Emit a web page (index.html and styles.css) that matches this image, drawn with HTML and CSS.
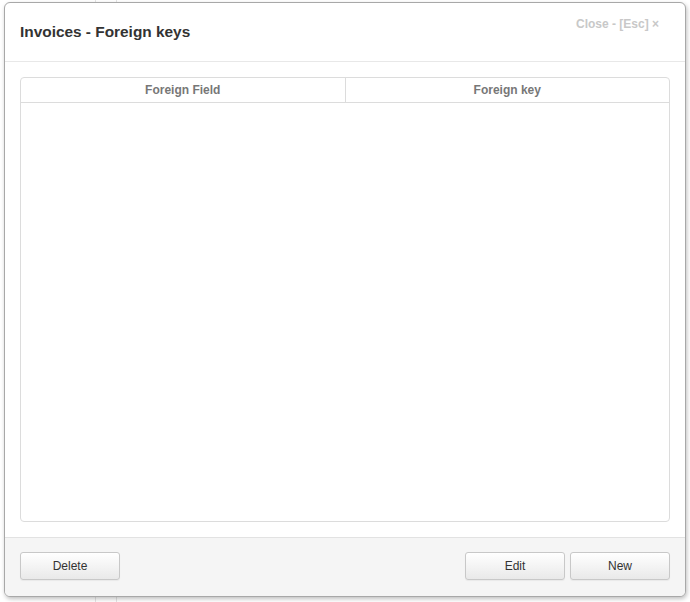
FILE: index.html
```html
<!DOCTYPE html>
<html>
<head>
<meta charset="utf-8">
<link rel="stylesheet" href="styles.css">
</head>
<body>
<div class="backdrop"></div>
<div class="dialog">
  <div class="dlg-header">
    <h1 class="dlg-title">Invoices - Foreign keys</h1>
    <span class="dlg-close">Close - [Esc] ×</span>
  </div>
  <div class="dlg-body">
    <div class="grid">
      <div class="grid-head">
        <div class="grid-col">Foreign Field</div>
        <div class="grid-col">Foreign key</div>
      </div>
      <div class="grid-rows"></div>
    </div>
  </div>
  <div class="dlg-footer">
    <button class="btn">Delete</button>
    <div class="spacer"></div>
    <button class="btn">Edit</button>
    <button class="btn">New</button>
  </div>
</div>
</body>
</html>
```
FILE: styles.css
```css
html, body {
  margin: 0;
  padding: 0;
  background: #fff;
  font-family: "Liberation Sans", Arial, sans-serif;
}
body {
  width: 690px;
  height: 602px;
  position: relative;
  overflow: hidden;
}
.backdrop {
  position: absolute;
  left: 95px;
  top: 0;
  width: 20px;
  height: 602px;
  border-left: 1px solid #e4e4e4;
  border-right: 1px solid #e4e4e4;
}
.dialog {
  position: absolute;
  left: 4px;
  top: 2px;
  width: 680px;
  height: 593px;
  border: 1px solid #a8a8a8;
  border-radius: 6px;
  background: #fff;
  box-shadow: 1px 2px 4px rgba(0,0,0,0.25);
  display: flex;
  flex-direction: column;
  overflow: hidden;
}
.dlg-header {
  height: 58px;
  border-bottom: 1px solid #e8e8e8;
  display: flex;
  justify-content: space-between;
  align-items: flex-start;
  padding: 0 26px 0 15px;
}
.dlg-title {
  margin: 19px 0 0 0;
  font-size: 15.4px;
  font-weight: bold;
  color: #333;
  line-height: 20px;
}
.dlg-close {
  margin-top: 13px;
  font-size: 12px;
  font-weight: bold;
  color: #c8c8c8;
  line-height: 16px;
}
.dlg-body {
  flex: 1;
  padding: 15px 15px 15px 15px;
  display: flex;
}
.grid {
  flex: 1;
  border: 1px solid #dcdcdc;
  border-radius: 4px;
  display: flex;
  flex-direction: column;
}
.grid-head {
  display: flex;
  height: 24px;
  border-bottom: 1px solid #dcdcdc;
}
.grid-col {
  flex: 1;
  text-align: center;
  font-size: 12px;
  font-weight: bold;
  color: #777;
  line-height: 24px;
}
.grid-col + .grid-col {
  border-left: 1px solid #dcdcdc;
}
.grid-rows {
  flex: 1;
}
.dlg-footer {
  border-top: 1px solid #e2e2e2;
  background: #f5f5f5;
  display: flex;
  align-items: flex-start;
  padding: 14px 15px 0 15px;
  gap: 5px;
  box-sizing: border-box;
  height: 59px;
}
.spacer {
  flex: 1;
}
.btn {
  width: 100px;
  height: 28px;
  border: 1px solid #c8c8c8;
  border-radius: 3px;
  background: linear-gradient(#ffffff, #e9e9e9);
  font-family: "Liberation Sans", Arial, sans-serif;
  font-size: 12px;
  color: #333;
  padding: 0;
  box-shadow: 0 1px 1px rgba(0,0,0,0.05);
}
```
